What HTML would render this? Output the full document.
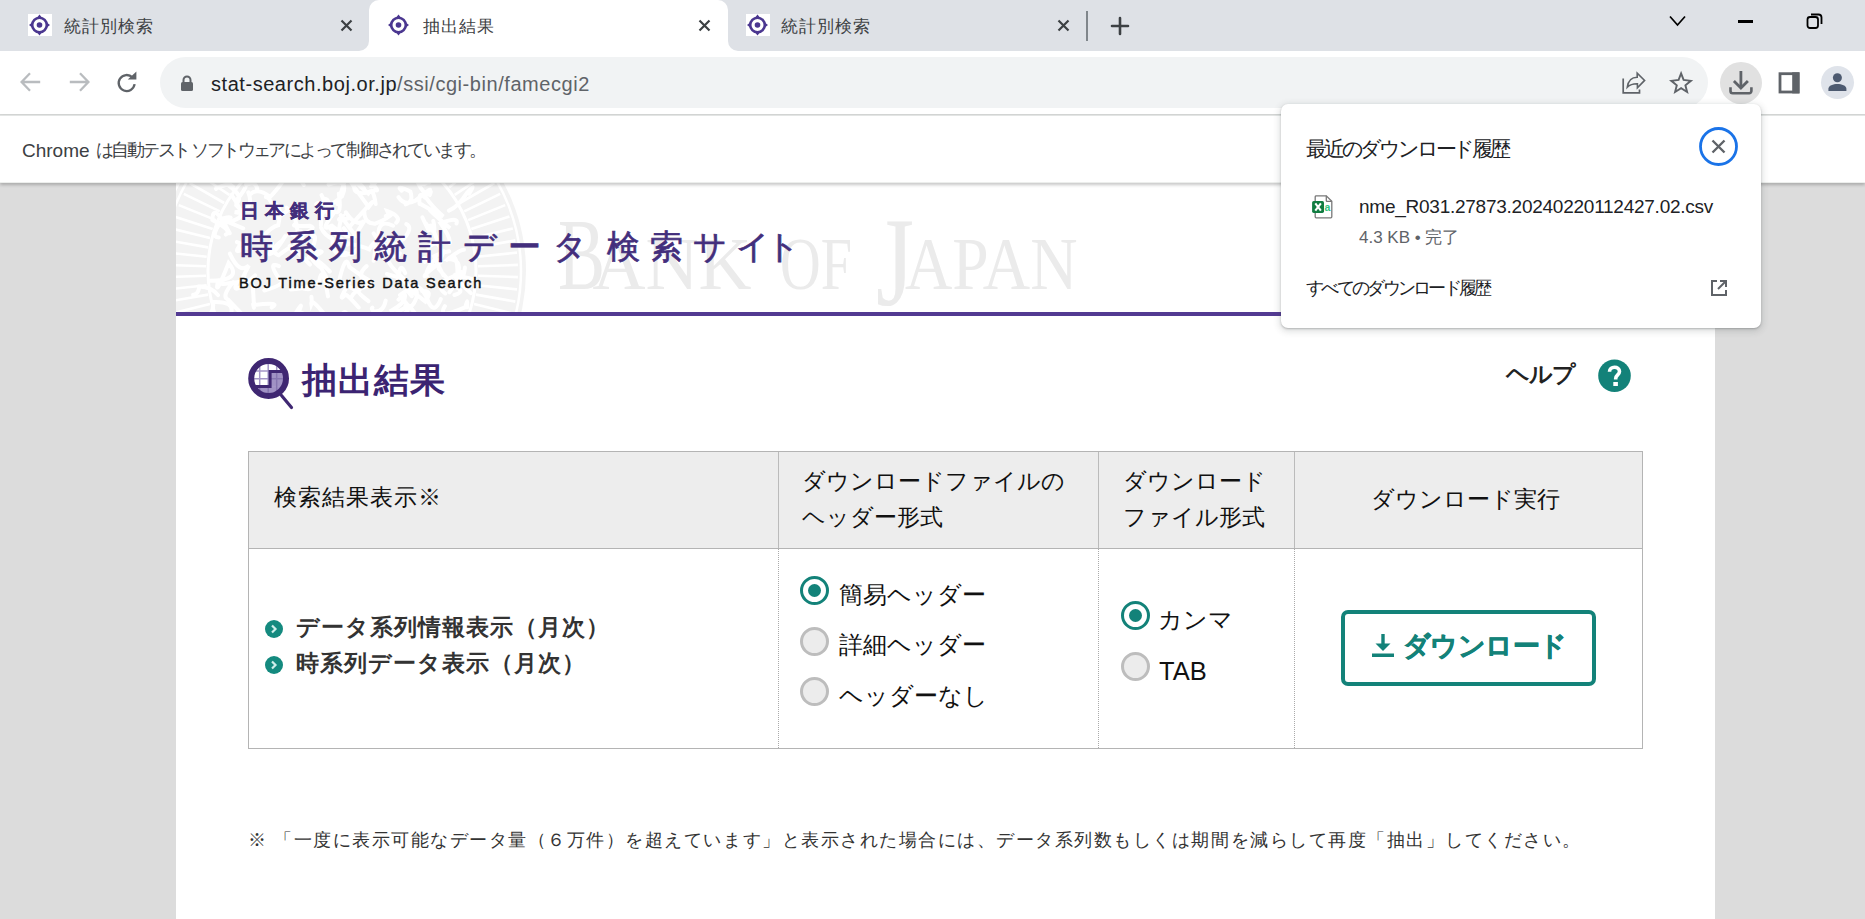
<!DOCTYPE html>
<html><head><meta charset="utf-8">
<style>
*{box-sizing:border-box;margin:0;padding:0}
html,body{width:1865px;height:919px;overflow:hidden;background:#dcdcdc;font-family:"Liberation Sans",sans-serif;color:#202124}
.abs{position:absolute}
#tabs{position:absolute;left:0;top:0;width:1865px;height:51px;background:#dee1e6}
.tab{position:absolute;top:0;height:51px}
.tabtitle{position:absolute;top:16px;font-size:17px;color:#3c4043;white-space:nowrap;line-height:22px;letter-spacing:1px}
.fav{position:absolute;top:14px;width:22px;height:22px}
.tclose{position:absolute;top:19px;width:13px;height:13px}
#toolbar{position:absolute;left:0;top:51px;width:1865px;height:64px;background:#fff;border-bottom:1px solid #d5d7d6}
#omni{position:absolute;left:160px;top:6px;width:1548px;height:51px;border-radius:26px;background:#f1f3f4}
#url{position:absolute;left:51px;top:14px;font-size:20px;line-height:26px;white-space:nowrap;color:#202124;letter-spacing:0.55px}
#url span{color:#5f6368}
#infobar{position:absolute;left:0;top:115px;width:1865px;height:68px;background:#fff;border-top:1px solid #e3e5e4;border-bottom:1px solid #eceeec;box-shadow:0 2px 3px rgba(0,0,0,0.22);z-index:2}
#infobar .t{position:absolute;left:22px;top:22px;font-size:18px;line-height:24px;color:#3c4043;white-space:nowrap;letter-spacing:-2.55px}
#page{position:absolute;left:176px;top:182px;width:1539px;height:737px;background:#fff}
#banner{position:absolute;left:0;top:0;width:1539px;height:130px;overflow:hidden;background:#fff}
#pline{position:absolute;left:0;top:130px;width:1539px;height:4px;background:#533a92}
.th{font-size:23px;line-height:36px;color:#111;white-space:nowrap}
.td{font-size:24px;line-height:26px;color:#111;white-space:nowrap}
.lnk{font-size:23px;line-height:28px;color:#333;font-weight:bold;white-space:nowrap;letter-spacing:1px}
.rad{width:29px;height:29px;border-radius:50%;border:3.3px solid #bdbdbd;background:#ececec}
.rad.on{border-color:#138279;background:#fff}
.rad.on::after{content:"";position:absolute;left:4.7px;top:4.7px;width:13px;height:13px;border-radius:50%;background:#138279}
</style></head><body>

<!-- TAB STRIP -->
<div id="tabs">
  <!-- active tab background -->
  <div class="abs" style="left:369px;top:0;width:359px;height:51px;background:#fff;border-radius:10px 10px 0 0"></div>
  <div class="abs" style="left:359px;top:41px;width:10px;height:10px;background:#fff"></div>
  <div class="abs" style="left:349px;top:31px;width:20px;height:20px;background:#dee1e6;border-radius:0 0 10px 0"></div>
  <div class="abs" style="left:728px;top:41px;width:10px;height:10px;background:#fff"></div>
  <div class="abs" style="left:728px;top:31px;width:20px;height:20px;background:#dee1e6;border-radius:0 0 0 10px"></div>

  <!-- tab 1 -->
  <div class="abs" style="left:28px;top:14px;width:24px;height:22px;background:#fff"></div>
  <svg class="abs" style="left:28px;top:14px" width="24" height="22" viewBox="0 0 24 22"><circle cx="11.5" cy="11" r="7.3" fill="none" stroke="#4b3790" stroke-width="2.6"/><circle cx="11.5" cy="11" r="2.8" fill="#4b3790"/><path d="M11.5 0.5l2.6 3.2h-5.2zM11.5 21.5l2.6-3.2h-5.2zM1 11l3.2 2.6v-5.2zM22 11l-3.2 2.6v-5.2z" fill="#4b3790"/></svg>
  <div class="tabtitle" style="left:64px">統計別検索</div>
  <svg class="tclose" style="left:340px" viewBox="0 0 13 13"><path d="M1.5 1.5L11.5 11.5M11.5 1.5L1.5 11.5" stroke="#3c4043" stroke-width="2.2"/></svg>

  <!-- tab 2 -->
  <svg class="abs" style="left:387px;top:14px" width="24" height="22" viewBox="0 0 24 22"><circle cx="11.5" cy="11" r="7.3" fill="none" stroke="#4b3790" stroke-width="2.6"/><circle cx="11.5" cy="11" r="2.8" fill="#4b3790"/><path d="M11.5 0.5l2.6 3.2h-5.2zM11.5 21.5l2.6-3.2h-5.2zM1 11l3.2 2.6v-5.2zM22 11l-3.2 2.6v-5.2z" fill="#4b3790"/></svg>
  <div class="tabtitle" style="left:423px">抽出結果</div>
  <svg class="tclose" style="left:698px" viewBox="0 0 13 13"><path d="M1.5 1.5L11.5 11.5M11.5 1.5L1.5 11.5" stroke="#3c4043" stroke-width="2.2"/></svg>

  <!-- tab 3 -->
  <div class="abs" style="left:746px;top:14px;width:24px;height:22px;background:#fff"></div>
  <svg class="abs" style="left:746px;top:14px" width="24" height="22" viewBox="0 0 24 22"><circle cx="11.5" cy="11" r="7.3" fill="none" stroke="#4b3790" stroke-width="2.6"/><circle cx="11.5" cy="11" r="2.8" fill="#4b3790"/><path d="M11.5 0.5l2.6 3.2h-5.2zM11.5 21.5l2.6-3.2h-5.2zM1 11l3.2 2.6v-5.2zM22 11l-3.2 2.6v-5.2z" fill="#4b3790"/></svg>
  <div class="tabtitle" style="left:781px">統計別検索</div>
  <svg class="tclose" style="left:1057px" viewBox="0 0 13 13"><path d="M1.5 1.5L11.5 11.5M11.5 1.5L1.5 11.5" stroke="#3c4043" stroke-width="2.2"/></svg>

  <div class="abs" style="left:1086px;top:11px;width:2px;height:30px;background:#80868b"></div>
  <svg class="abs" style="left:1110px;top:16px" width="20" height="20" viewBox="0 0 20 20"><path d="M10 2V18M2 10H18" stroke="#3c4043" stroke-width="2.6" stroke-linecap="round"/></svg>

  <!-- window controls -->
  <svg class="abs" style="left:1668px;top:14px" width="19" height="15" viewBox="0 0 19 15"><path d="M2 2.5L9.5 11L17 2.5" fill="none" stroke="#000" stroke-width="1.7"/></svg>
  <div class="abs" style="left:1738px;top:20px;width:15px;height:2.5px;background:#000"></div>
  <svg class="abs" style="left:1805px;top:12px" width="19" height="19" viewBox="0 0 19 19"><rect x="2.5" y="5" width="10.5" height="11" rx="2.5" fill="none" stroke="#000" stroke-width="1.8"/><path d="M6 2.5H13.5A3 3 0 0 1 16.5 5.5V12" fill="none" stroke="#000" stroke-width="1.8"/></svg>
</div>

<!-- TOOLBAR -->
<div id="toolbar">
  <svg class="abs" style="left:19px;top:19px" width="24" height="24" viewBox="0 0 24 24"><path d="M21.2 12H4M11 3.3L2.6 12L11 20.7" fill="none" stroke="#b9bcbf" stroke-width="2.3"/></svg>
  <svg class="abs" style="left:67px;top:19px" width="24" height="24" viewBox="0 0 24 24"><path d="M2.8 12H20M13 3.3L21.4 12L13 20.7" fill="none" stroke="#b9bcbf" stroke-width="2.3"/></svg>
  <svg class="abs" style="left:115px;top:20px" width="24" height="24" viewBox="0 0 24 24"><path d="M19.6 13.2A8 8 0 1 1 17.4 6.4" fill="none" stroke="#5f6368" stroke-width="2.3"/><path d="M12.8 8.6H21.4V0.4z" fill="#5f6368"/></svg>
  <div id="omni">
    <svg class="abs" style="left:20px;top:18px" width="14" height="17" viewBox="0 0 14 17"><path d="M3.5 7V5A3.5 3.5 0 0 1 10.5 5V7" fill="none" stroke="#5f6368" stroke-width="2"/><rect x="1" y="7" width="12" height="9" rx="1.5" fill="#5f6368"/></svg>
    <div id="url">stat-search.boj.or.jp<span>/ssi/cgi-bin/famecgi2</span></div>
    <!-- share -->
    <svg class="abs" style="left:1461px;top:9px" width="26" height="30" viewBox="0 0 26 30"><path d="M2.2 12.4V26.9H18.5V23.5" fill="none" stroke="#5f6368" stroke-width="1.7"/><path d="M6.3 21.2C7.2 14.6 11 11.2 16.2 11.2V7.2L23.6 14.4L16.4 21.8V17.7C12 17.6 8.8 18.7 6.3 21.2z" fill="none" stroke="#5f6368" stroke-width="1.6" stroke-linejoin="miter"/></svg>
    <!-- star -->
    <svg class="abs" style="left:1509px;top:9px" width="26" height="30" viewBox="0 0 26 30"><path d="M12.1 7.4L14.6 13.9L21.9 14.8L16.4 19.3L18.1 26L12.1 22.1L6.1 26L7.8 19.3L2.3 14.8L9.6 13.9z" fill="none" stroke="#5f6368" stroke-width="1.9" stroke-linejoin="miter"/></svg>
  </div>
  <div class="abs" style="left:1720px;top:11px;width:42px;height:42px;border-radius:50%;background:#e1e1e1"></div>
  <svg class="abs" style="left:1728px;top:19px" width="26" height="26" viewBox="0 0 26 26"><path d="M12.9 1V17" fill="none" stroke="#5f6368" stroke-width="2.8"/><path d="M5.9 11.1L12.9 18.1L19.9 11.1" fill="none" stroke="#5f6368" stroke-width="2.8"/><path d="M2.5 17.3V21A2.2 2.2 0 0 0 4.7 23.2H21.2A2.2 2.2 0 0 0 23.4 21V17.3" fill="none" stroke="#5f6368" stroke-width="2.6"/></svg>
  <svg class="abs" style="left:1777px;top:21px" width="24" height="23" viewBox="0 0 24 23"><rect x="3" y="1.7" width="18.1" height="18.3" fill="none" stroke="#5f6368" stroke-width="2.8"/><rect x="15.2" y="0.3" width="7.3" height="21.1" fill="#5f6368"/></svg>
  <div class="abs" style="left:1821px;top:15px;width:33px;height:33px;border-radius:50%;background:#dfe3ea"></div>
  <svg class="abs" style="left:1821px;top:15px" width="33" height="33" viewBox="0 0 33 33"><circle cx="16.4" cy="11.7" r="4.5" fill="#4d5a70"/><path d="M7.4 25V22.8C7.4 19.6 12.2 18 16.4 18S25.4 19.6 25.4 22.8V25z" fill="#4d5a70"/></svg>
</div>

<!-- INFO BAR -->
<div id="infobar"><div class="t" style="letter-spacing:0;font-size:19px;top:23px">Chrome</div><div class="t" style="left:96px">は自動テスト ソフトウェアによって制御されています。</div></div>

<!-- PAGE -->
<div id="page">
  <div id="banner">
    <svg class="abs" style="left:0;top:0" width="1539" height="130" viewBox="0 0 1539 130">
      <g>
        <circle cx="166" cy="89" r="184" fill="#f3f3f3"/>
        <circle cx="166" cy="89" r="179" fill="none" stroke="#fff" stroke-width="2.5"/>
        <circle cx="166" cy="89" r="134" fill="none" stroke="#fff" stroke-width="3"/>
        <path d="M301.9 93.7L341.9 95.1M301.3 103.2L341.0 107.4M299.9 112.6L339.3 119.6M298.0 121.9L336.8 131.6M295.3 131.0L333.4 143.4M292.1 139.9L329.2 154.9M288.2 148.6L324.2 166.2M283.8 157.0L318.4 177.0M278.7 165.1L311.9 187.4M273.2 172.7L304.7 197.4M267.1 180.0L296.8 206.8M260.5 186.8L288.3 215.6M253.4 193.2L279.1 223.8M245.9 199.0L269.5 231.4M238.1 204.3L259.3 238.3M229.8 209.1L248.6 244.4M221.3 213.2L237.6 249.8M212.5 216.8L226.2 254.4M203.5 219.7L214.5 258.2M194.3 222.0L202.6 261.2M184.9 223.7L190.5 263.3M175.5 224.7L178.3 264.6M166.0 225.0L166.0 265.0M156.5 224.7L153.7 264.6M147.1 223.7L141.5 263.3M137.7 222.0L129.4 261.2M128.5 219.7L117.5 258.2M119.5 216.8L105.8 254.4M110.7 213.2L94.4 249.8M102.2 209.1L83.4 244.4M93.9 204.3L72.7 238.3M86.1 199.0L62.5 231.4M78.6 193.2L52.9 223.8M71.5 186.8L43.7 215.6M64.9 180.0L35.2 206.8M58.8 172.7L27.3 197.4M53.3 165.1L20.1 187.4M48.2 157.0L13.6 177.0M43.8 148.6L7.8 166.2M39.9 139.9L2.8 154.9M36.7 131.0L-1.4 143.4M34.0 121.9L-4.8 131.6M32.1 112.6L-7.3 119.6M30.7 103.2L-9.0 107.4M30.1 93.7L-9.9 95.1M30.1 84.3L-9.9 82.9M30.7 74.8L-9.0 70.6M32.1 65.4L-7.3 58.4M34.0 56.1L-4.8 46.4M36.7 47.0L-1.4 34.6M39.9 38.1L2.8 23.1M43.8 29.4L7.8 11.8M48.2 21.0L13.6 1.0M53.3 12.9L20.1 -9.4M58.8 5.3L27.3 -19.4M64.9 -2.0L35.2 -28.8M71.5 -8.8L43.7 -37.6M78.6 -15.2L52.9 -45.8M86.1 -21.0L62.5 -53.4M93.9 -26.3L72.7 -60.3M102.2 -31.1L83.4 -66.4M110.7 -35.2L94.4 -71.8M119.5 -38.8L105.8 -76.4M128.5 -41.7L117.5 -80.2M137.7 -44.0L129.4 -83.2M147.1 -45.7L141.5 -85.3M156.5 -46.7L153.7 -86.6M166.0 -47.0L166.0 -87.0M175.5 -46.7L178.3 -86.6M184.9 -45.7L190.5 -85.3M194.3 -44.0L202.6 -83.2M203.5 -41.7L214.5 -80.2M212.5 -38.8L226.2 -76.4M221.3 -35.2L237.6 -71.8M229.8 -31.1L248.6 -66.4M238.1 -26.3L259.3 -60.3M245.9 -21.0L269.5 -53.4M253.4 -15.2L279.1 -45.8M260.5 -8.8L288.3 -37.6M267.1 -2.0L296.8 -28.8M273.2 5.3L304.7 -19.4M278.7 12.9L311.9 -9.4M283.8 21.0L318.4 1.0M288.2 29.4L324.2 11.8M292.1 38.1L329.2 23.1M295.3 47.0L333.4 34.6M298.0 56.1L336.8 46.4M299.9 65.4L339.3 58.4M301.3 74.8L341.0 70.6M301.9 84.3L341.9 82.9" stroke="#fff" stroke-width="2.6"/>
        <path d="M139.3 69.6q12.7 -1.4 0.3 3.8q-9.5 0.5 5.7 12.9M218.8 -13.3q14.5 18.6 6.8 5.1q-10.3 -19.4 1.2 -19.4M135.4 114.8q0.6 5.6 -0.0 7.1q-1.3 -8.9 21.9 21.8M267.3 93.2q-5.5 -10.8 -9.3 -18.9q8.0 -4.0 15.2 -5.0M246.9 23.2q-12.4 -6.7 20.4 11.4q-11.5 -10.1 -17.6 -19.4M253.0 8.4q1.8 -2.1 -13.6 10.2q-11.1 5.7 -16.9 -3.5M60.2 23.2q14.1 12.1 -8.6 16.9q-8.7 -4.2 15.6 6.2M60.4 21.3q8.2 -6.8 -9.0 -18.8q-12.3 3.3 -11.3 4.5M112.7 52.5q13.8 -0.7 3.3 16.1q-9.5 -13.8 18.0 14.0M72.3 10.4q7.2 17.6 -13.4 19.8q11.5 4.1 -3.5 -17.4M68.7 92.7q-7.3 12.9 4.2 -9.1q-9.7 8.8 -19.0 -12.0M174.6 116.4q3.4 -8.8 18.4 -13.0q-14.5 -9.2 -2.4 -19.3M178.8 1.1q-4.1 15.6 21.1 6.9q5.7 3.4 -15.8 -20.5M221.3 134.0q-14.4 5.4 -0.8 10.1q-5.4 20.0 -18.7 2.0M233.2 124.0q7.1 8.1 12.9 18.3q-4.4 7.4 17.6 16.3M127.7 106.5q10.9 2.9 5.5 -5.2q2.5 4.4 -18.5 6.1M230.3 42.1q7.1 3.2 -2.6 14.9q-12.5 10.0 -20.7 4.5M148.7 16.8q6.0 -0.1 5.0 18.5q-7.3 -19.5 -8.8 7.8M288.9 85.6q-1.7 15.7 -7.6 7.3q-9.0 -2.8 13.5 18.2M280.5 41.5q2.5 -7.3 -16.0 -0.2q10.1 13.9 9.3 19.8M81.3 7.1q-1.5 -9.0 -12.6 -3.8q3.8 -0.2 -8.1 14.9M223.8 71.3q-5.7 11.7 -21.2 -16.0q-1.4 -19.0 14.5 -11.6M197.6 51.4q3.9 6.2 13.5 20.2q5.5 -12.0 -1.1 -14.1M225.7 8.7q-6.8 -6.2 8.7 0.9q3.4 10.2 -4.7 12.8M196.4 125.6q-3.7 2.8 16.7 13.1q13.3 -1.5 6.7 -13.0M228.2 110.9q4.2 8.7 -12.6 17.6q14.4 19.1 1.6 12.8M95.7 125.6q10.7 -6.1 -18.4 -2.6q1.5 10.7 -0.6 -20.7M254.0 7.7q-4.9 11.5 -15.8 -15.5q0.5 8.9 15.0 8.3M63.1 64.3q-6.3 9.2 6.1 1.0q10.3 2.4 -8.3 -5.2M268.9 124.1q-8.8 14.0 20.6 1.1q2.2 -12.0 1.6 0.1M189.7 -15.6q14.1 0.6 -4.4 13.2q1.9 -0.4 8.4 -19.1M167.8 46.2q13.7 16.9 -10.2 -1.2q-11.2 -2.7 13.9 17.6M147.3 30.8q-9.3 4.7 18.7 -16.3q8.4 -19.1 -13.5 -12.0M216.7 31.5q-4.3 4.8 -17.4 10.2q-11.3 0.4 -11.0 -13.3M165.0 49.9q-3.7 -3.5 1.3 -15.0q-8.9 5.3 6.1 1.3M270.9 77.9q10.7 -10.7 10.6 13.7q12.1 -7.4 -8.1 18.6M62.0 139.7q11.6 -14.6 -11.5 10.0q-7.2 -16.1 14.6 -3.4M250.7 0.2q-2.9 7.4 -21.2 -13.2q5.5 16.5 20.6 -16.9M156.9 101.3q0.1 7.4 -13.7 -18.9q-11.8 -18.5 2.3 0.7M177.7 3.4q-9.5 -11.8 15.0 21.6q12.8 -16.2 -19.3 19.9M142.5 102.4q-5.2 -1.3 0.7 -3.1q3.0 -19.5 8.8 15.1M49.8 52.6q7.2 -3.8 -13.4 -14.7q0.4 -19.4 17.3 13.3M222.5 117.7q3.9 -3.8 4.4 0.2q14.5 12.2 -10.6 18.1M235.7 104.5q9.4 -3.8 17.4 16.7q5.8 10.7 11.7 -4.1M228.5 -8.7q-4.7 -1.2 -21.5 -6.4q4.2 5.0 -11.8 19.6M209.8 34.1q4.8 2.8 1.5 -4.9q15.0 5.7 8.9 11.5M193.1 98.2q-7.3 -3.9 -19.8 -13.4q-3.7 -16.1 -11.0 17.8M171.5 61.3q14.0 2.7 21.8 6.1q9.3 -17.0 4.3 11.4M42.8 55.5q-9.9 -0.2 4.9 -19.4q13.4 -3.2 1.2 4.3M110.6 25.7q4.7 2.4 -9.5 9.5q-6.1 -19.4 -11.2 -20.1M41.7 100.7q-3.3 15.9 10.9 -19.8q14.7 17.8 -18.8 17.8M131.7 56.4q14.2 -10.3 1.0 19.2q6.7 -1.3 21.1 13.9M189.2 -1.6q3.7 -1.8 -13.0 -19.7q0.8 -15.0 -2.5 7.4M140.3 21.9q2.5 -3.2 12.2 1.4q14.9 18.1 10.3 -11.5M248.8 80.0q-4.2 -9.1 8.1 2.9q2.8 5.3 11.1 -13.6M72.2 136.8q12.5 15.2 -20.3 -19.3q-6.9 -3.0 5.4 -17.5M168.7 -8.4q-12.4 7.1 2.2 5.8q-3.8 -0.9 -12.7 -6.9M235.8 114.2q-12.8 -15.2 13.6 5.4q8.1 -11.5 -3.3 -10.6M257.3 39.0q4.6 19.6 -7.7 2.1q7.4 16.8 -3.2 -5.8M176.2 57.6q5.6 -8.0 12.1 -18.7q-8.6 6.5 -18.4 -8.6M229.2 91.0q-6.5 -14.3 -6.3 9.9q-4.0 -15.3 9.2 3.0M255.0 28.8q-5.5 -4.0 19.1 17.4q-7.6 -5.5 -5.9 -6.0M120.6 42.0q-9.2 2.6 13.1 1.8q10.1 2.5 -14.2 11.4M169.6 70.8q14.0 6.0 13.4 -19.2q1.4 11.5 -18.3 -18.4M233.2 123.9q-12.5 5.4 -15.7 10.8q4.5 -10.2 -12.3 11.7M162.1 102.4q-3.2 -6.5 20.6 7.6q-0.2 1.5 9.7 9.2M262.7 86.7q10.6 12.2 14.7 17.1q13.7 5.6 1.0 9.2M254.7 47.5q-2.4 -14.2 10.6 21.6q-3.7 -13.3 -13.0 -3.3M86.4 135.2q-13.2 -7.7 -16.9 6.5q8.3 -12.8 -19.3 -1.8M182.7 125.5q-13.9 -15.7 -13.9 -12.4q-7.9 8.7 4.2 -12.1M46.9 101.2q-5.6 1.9 14.0 -0.9q-7.2 15.5 18.2 -6.9M170.6 133.1q-0.5 -11.2 -19.8 19.7q9.0 -4.6 1.2 0.7M80.6 138.4q4.7 -10.5 -21.5 -1.2q-3.9 11.9 9.4 4.7M96.2 21.5q11.1 0.6 6.0 21.7q-7.0 1.4 -15.4 11.9M269.2 111.5q-12.5 -9.2 9.5 -17.7q-0.6 -1.3 20.0 3.8M272.9 28.6q8.7 -3.3 18.3 -18.0q9.8 -11.7 1.9 1.1M42.0 113.1q-5.7 -7.6 -18.7 -8.5q-1.0 8.6 -6.2 8.2M142.4 134.7q9.9 6.2 -21.5 -5.4q6.3 -10.5 2.8 -1.8M253.8 13.1q3.5 -8.4 -5.5 1.7q-6.1 -6.5 -4.7 7.3M74.6 12.0q6.9 -6.8 19.6 2.8q6.7 -6.7 14.4 -17.9M213.6 93.3q-9.6 -3.9 14.8 4.1q-12.3 -10.9 -15.1 -16.5M124.3 -8.4q12.6 -2.9 0.5 6.5q8.0 12.8 -5.0 -7.4M126.0 -17.5q-3.0 8.0 21.2 12.7q4.8 4.3 -21.2 -7.4M102.9 84.1q-11.8 -4.9 0.4 12.7q9.8 4.5 -15.0 11.7M288.0 67.7q-4.4 0.0 -15.8 9.4q14.6 0.6 9.5 14.8M55.1 131.2q3.8 -12.1 -18.3 -11.2q2.3 7.9 -7.5 18.9M109.2 54.1q-11.3 18.9 -16.0 17.8q1.3 2.4 2.7 -10.4M259.8 76.2q-11.3 13.0 -9.3 17.5q-7.8 2.9 14.6 -13.8M170.8 -7.8q-14.0 -12.8 21.4 19.3q4.8 -7.7 7.5 10.5M115.9 74.7q9.1 -19.3 -13.2 -1.4q-10.7 -4.5 3.1 -14.4M161.5 22.2q2.0 -6.7 6.2 -20.3q5.1 -14.2 20.2 4.4M145.1 45.8q3.7 7.6 11.4 11.1q-0.4 19.8 14.9 15.6M125.0 49.4q2.0 16.2 1.1 1.1q-2.0 16.2 -7.9 -19.6M229.4 124.0q7.0 3.9 11.1 -8.6q2.8 -17.2 -16.5 -2.3M155.9 43.5q-13.4 7.8 1.2 -11.5q-5.8 -4.2 -11.6 -19.0M209.7 118.6q-2.4 12.2 -12.2 10.9q2.0 16.1 -17.7 12.9" fill="none" stroke="#fff" stroke-width="4" stroke-linecap="round"/>
      </g>
      <g font-family="Liberation Serif" fill="#ebebeb">
        <text x="382" y="106.6" font-size="101" textLength="47" lengthAdjust="spacingAndGlyphs">B</text>
        <text x="416.5" y="106.6" font-size="74" textLength="159" lengthAdjust="spacingAndGlyphs">ANK</text>
        <text x="604" y="106.6" font-size="74" textLength="72" lengthAdjust="spacingAndGlyphs">OF</text>
        <text x="700" y="123" font-size="127" textLength="38" lengthAdjust="spacingAndGlyphs">J</text>
        <text x="729" y="106.6" font-size="74" textLength="172.5" lengthAdjust="spacingAndGlyphs">APAN</text>
      </g>
    </svg>
    <div class="abs" style="left:64px;top:18px;font-size:19px;line-height:22px;color:#432e7c;letter-spacing:5.9px;font-weight:bold;-webkit-text-stroke:0.4px #432e7c;white-space:nowrap">日本銀行</div>
    <div class="abs" style="left:64px;top:45px;font-size:33px;line-height:40px;color:#432e7c;letter-spacing:11.5px;font-weight:normal;-webkit-text-stroke:0.7px #432e7c;white-space:nowrap">時系列統計データ</div><div class="abs" style="left:431px;top:45px;font-size:33px;line-height:40px;color:#432e7c;font-weight:normal;-webkit-text-stroke:0.7px #432e7c;white-space:nowrap"><span style="letter-spacing:10px">検索</span><span style="letter-spacing:9px">サ</span><span style="letter-spacing:-4px">イ</span>ト</div>
    <div class="abs" style="left:63px;top:93px;font-size:14.5px;line-height:16px;color:#111;letter-spacing:1.85px;font-weight:normal;-webkit-text-stroke:0.45px #111;white-space:nowrap">BOJ Time-Series Data Search</div>
  </div>
  <div id="pline"></div>

  <!-- title -->
  <svg class="abs" style="left:72px;top:175px" width="47" height="54" viewBox="0 0 47 54">
    <defs><clipPath id="lens"><circle cx="20.6" cy="21.5" r="15"/></clipPath></defs>
    <g clip-path="url(#lens)">
      <rect x="0" y="0" width="41" height="43" fill="#fff"/>
      <path d="M0 29.6H22.1V14.6H41V43H0z" fill="#a092c4"/>
      <g stroke="#a597c8" stroke-width="1.5"><path d="M0 6.2H41M0 14H41M0 21.8H41M0 29.6H41M0 37.4H41M3.2 0V43M11.7 0V43M20.2 0V43M28.7 0V43M37.2 0V43"/></g>
      <g stroke="#8676b0" stroke-width="1.5"><path d="M22.1 21.8H41M0 37.4H41M28.7 14.6V43M11.7 29.6V43M20.2 29.6V43M37.2 14.6V43"/></g>
      <path d="M0 29.6H22.1V14.6H41" fill="none" stroke="#3f2772" stroke-width="3"/>
    </g>
    <circle cx="20.6" cy="21.5" r="17.4" fill="none" stroke="#3f2772" stroke-width="6"/>
    <path d="M33.5 38.5L43.5 50.5" stroke="#3f2772" stroke-width="3.2" stroke-linecap="round"/>
  </svg>
  <div class="abs" style="left:126px;top:178px;font-size:35px;line-height:40px;color:#3b2472;font-weight:bold;white-space:nowrap;letter-spacing:1px">抽出結果</div>

  <div class="abs" style="left:1330px;top:176px;font-size:23px;line-height:32px;color:#222;font-weight:bold;white-space:nowrap;letter-spacing:-1px">ヘルプ</div>
  <svg class="abs" style="left:1422px;top:177px" width="33" height="34" viewBox="0 0 33 34"><circle cx="16.5" cy="16.8" r="16.3" fill="#138279"/><path d="M11.5 12.8C11.5 9.8 13.8 8.3 16.5 8.3S21.5 9.8 21.5 12.6C21.5 15.8 17.7 16 17.7 19.5V20.5" fill="none" stroke="#fff" stroke-width="3.6"/><rect x="15.3" y="23" width="4.6" height="4" fill="#fff"/></svg>

  <!-- table -->
  <div class="abs" style="left:72px;top:269px;width:1395px;height:298px;border:1px solid #b4b4b4"></div>
  <div class="abs" style="left:73px;top:270px;width:1393px;height:97px;background:#ededed;border-bottom:1px solid #b4b4b4"></div>
  <div class="abs" style="left:602px;top:270px;width:1px;height:96px;background:#bbb"></div>
  <div class="abs" style="left:922px;top:270px;width:1px;height:96px;background:#bbb"></div>
  <div class="abs" style="left:1118px;top:270px;width:1px;height:96px;background:#bbb"></div>
  <div class="abs" style="left:602px;top:367px;width:0;height:199px;border-left:1px dotted #aaa"></div>
  <div class="abs" style="left:922px;top:367px;width:0;height:199px;border-left:1px dotted #aaa"></div>
  <div class="abs" style="left:1118px;top:367px;width:0;height:199px;border-left:1px dotted #aaa"></div>

  <div class="th abs" style="left:98px;top:297px;letter-spacing:1px">検索結果表示※</div>
  <div class="th abs" style="left:626px;top:281px">ダウンロードファイルの<br>ヘッダー形式</div>
  <div class="th abs" style="left:947px;top:281px">ダウンロード<br>ファイル形式</div>
  <div class="th abs" style="left:1195px;top:299px">ダウンロード実行</div>

  <!-- col1 body -->
  <svg class="abs" style="left:89px;top:438px" width="18" height="18" viewBox="0 0 18 18"><circle cx="9" cy="9" r="9" fill="#148a7f"/><path d="M7 5.5L10.5 9L7 12.5" fill="none" stroke="#cfeeea" stroke-width="2.2"/></svg>
  <svg class="abs" style="left:89px;top:474px" width="18" height="18" viewBox="0 0 18 18"><circle cx="9" cy="9" r="9" fill="#148a7f"/><path d="M7 5.5L10.5 9L7 12.5" fill="none" stroke="#cfeeea" stroke-width="2.2"/></svg>
  <div class="abs lnk" style="left:120px;top:431px">データ系列情報表示（月次）</div>
  <div class="abs lnk" style="left:120px;top:467px">時系列データ表示（月次）</div>

  <!-- col2 body -->
  <div class="rad on abs" style="left:624px;top:394px"></div>
  <div class="rad abs" style="left:624px;top:445px"></div>
  <div class="rad abs" style="left:624px;top:495px"></div>
  <div class="td abs" style="left:663px;top:400px">簡易ヘッダー</div>
  <div class="td abs" style="left:663px;top:450px">詳細ヘッダー</div>
  <div class="td abs" style="left:663px;top:501px">ヘッダーなし</div>

  <!-- col3 body -->
  <div class="rad on abs" style="left:945px;top:419px"></div>
  <div class="rad abs" style="left:945px;top:470px"></div>
  <div class="td abs" style="left:982px;top:425px">カンマ</div>
  <div class="td abs" style="left:983px;top:476px;font-size:25.5px">TAB</div>

  <!-- col4 button -->
  <div class="abs" style="left:1165px;top:428px;width:255px;height:76px;border:4px solid #138279;border-radius:7px;background:#fff"></div>
  <svg class="abs" style="left:1196px;top:452px" width="22" height="23" viewBox="0 0 22 23"><path d="M11 0V13" stroke="#138279" stroke-width="3.4"/><path d="M3.5 9.5H18.5L11 17z" fill="#138279"/><rect x="0" y="19.5" width="22" height="3.5" fill="#138279"/></svg>
  <div class="abs" style="left:1227px;top:448px;font-size:26.5px;line-height:32px;color:#138279;font-weight:bold;-webkit-text-stroke:0.6px #138279;white-space:nowrap;letter-spacing:-0.6px">ダウンロード</div>

  <div class="abs" style="left:72px;top:646px;font-size:18px;line-height:24px;color:#333;white-space:nowrap;letter-spacing:1.52px">※ 「一度に表示可能なデータ量（６万件）を超えています」と表示された場合には、データ系列数もしくは期間を減らして再度「抽出」してください。</div>
</div>

<!-- DOWNLOAD BUBBLE -->
<div class="abs" style="left:1281px;top:104px;width:480px;height:224px;background:#fff;border-radius:7px;box-shadow:0 1px 2px rgba(60,64,67,0.3),0 2px 6px 2px rgba(60,64,67,0.15);z-index:5">
  <div class="abs" style="left:25px;top:32px;font-size:21px;line-height:26px;color:#202124;white-space:nowrap;letter-spacing:-3.2px">最近のダウンロード履歴</div>
  <svg class="abs" style="left:418px;top:23px" width="39" height="39" viewBox="0 0 39 39"><circle cx="19.5" cy="19.5" r="18" fill="none" stroke="#1a73e8" stroke-width="2.8"/><path d="M13.5 13.5L25.5 25.5M25.5 13.5L13.5 25.5" stroke="#5f6368" stroke-width="2.4"/></svg>
  <svg class="abs" style="left:19px;top:81px" width="50" height="40" viewBox="0 0 50 40"><path d="M16 10.8H26.3L31.8 16.3V31.8A1 1 0 0 1 30.8 32.8H16.2A1 1 0 0 1 15.2 31.8V11.8A1 1 0 0 1 16 10.8z" fill="#fff" stroke="#787878" stroke-width="1.3"/><path d="M26.3 10.8V15.6A0.8 0.8 0 0 0 27 16.3H31.8" fill="none" stroke="#787878" stroke-width="1.3"/><rect x="12.1" y="16.1" width="11.9" height="11.8" rx="1.6" fill="#107c41"/><path d="M15.3 18.4L20.9 25.6M20.9 18.4L15.3 25.6" stroke="#fff" stroke-width="2.1"/><text x="24.6" y="26.2" font-family="Liberation Sans" font-weight="bold" font-size="10.5" fill="#33c481">a</text></svg>
  <div class="abs" style="left:78px;top:91px;font-size:19px;line-height:24px;color:#202124;white-space:nowrap;letter-spacing:-0.25px">nme_R031.27873.20240220112427.02.csv</div>
  <div class="abs" style="left:78px;top:123px;font-size:17px;line-height:22px;color:#5f6368;white-space:nowrap">4.3 KB • 完了</div>
  <div class="abs" style="left:25px;top:172px;font-size:18px;line-height:24px;color:#202124;white-space:nowrap;letter-spacing:-2.7px">すべてのダウンロード履歴</div>
  <svg class="abs" style="left:429px;top:175px" width="18" height="18" viewBox="0 0 18 18"><path d="M7 2H2V16H16V11" fill="none" stroke="#5f6368" stroke-width="2"/><path d="M10 2H16V8M16 2L8 10" fill="none" stroke="#5f6368" stroke-width="2"/></svg>
</div>

</body></html>
